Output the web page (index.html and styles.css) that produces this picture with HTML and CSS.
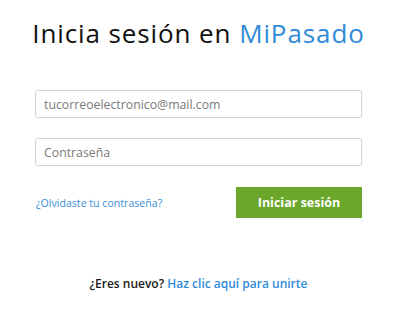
FILE: index.html
```html
<!DOCTYPE html>
<html lang="es">
<head>
    <meta charset="UTF-8">
    <title>Inicia sesión en MiPasado</title>
    <link rel="stylesheet" href="styles.css">
</head>
<body>

    <div class="login">
        <h1 class="title">Inicia sesión en <span class="brand">MiPasado</span></h1>

        <input type="email" class="field field-email" placeholder="tucorreoelectronico@mail.com">
        <input type="password" class="field field-pass" placeholder="Contraseña">

        <div class="actions">
            <a href="#" class="forgot">¿Olvidaste tu contraseña?</a>
            <button class="btn-login">Iniciar sesión</button>
        </div>

        <p class="signup">¿Eres nuevo? <a href="#">Haz clic aquí para unirte</a></p>
    </div>

</body>
</html>
```

FILE: styles.css
```css
body {
    margin: 0;
    background: #fff;
    font-family: "Open Sans", Arial, sans-serif;
    color: #1a1a1a;
}
.login {
    width: 327px;
    padding: 0 0 0 35px;
}
.title {
    margin: 17px -20px 0;
    font-size: 26px;
    font-weight: 400;
    letter-spacing: 0.9px;
    text-align: center;
    line-height: 32px;
    color: #111;
}
.brand {
    color: #2f8bd8;
}
.field {
    display: block;
    width: 100%;
    height: 28px;
    box-sizing: border-box;
    border: 1px solid #d2d2d2;
    border-radius: 3px;
    padding: 0 8px;
    font-family: inherit;
    font-size: 12.3px;
    color: #333;
    outline: none;
}
.field::placeholder {
    color: #7a7a7a;
}
.field-email {
    margin-top: 41px;
}
.field-pass {
    margin-top: 20px;
}
.actions {
    display: flex;
    align-items: center;
    justify-content: space-between;
    margin-top: 21px;
}
.forgot {
    font-size: 10.6px;
    color: #3a8fd6;
    text-decoration: none;
    padding-left: 1px;
}
.btn-login {
    width: 126px;
    height: 31px;
    border: none;
    background: #6aa72b;
    color: #fff;
    font-family: inherit;
    font-size: 12.5px;
    font-weight: 700;
    cursor: pointer;
}
.signup {
    margin: 57px 0 0;
    text-align: center;
    font-size: 12px;
    font-weight: 600;
    color: #1a1a1a;
}
.signup a {
    color: #2f8bd8;
    text-decoration: none;
}
```
